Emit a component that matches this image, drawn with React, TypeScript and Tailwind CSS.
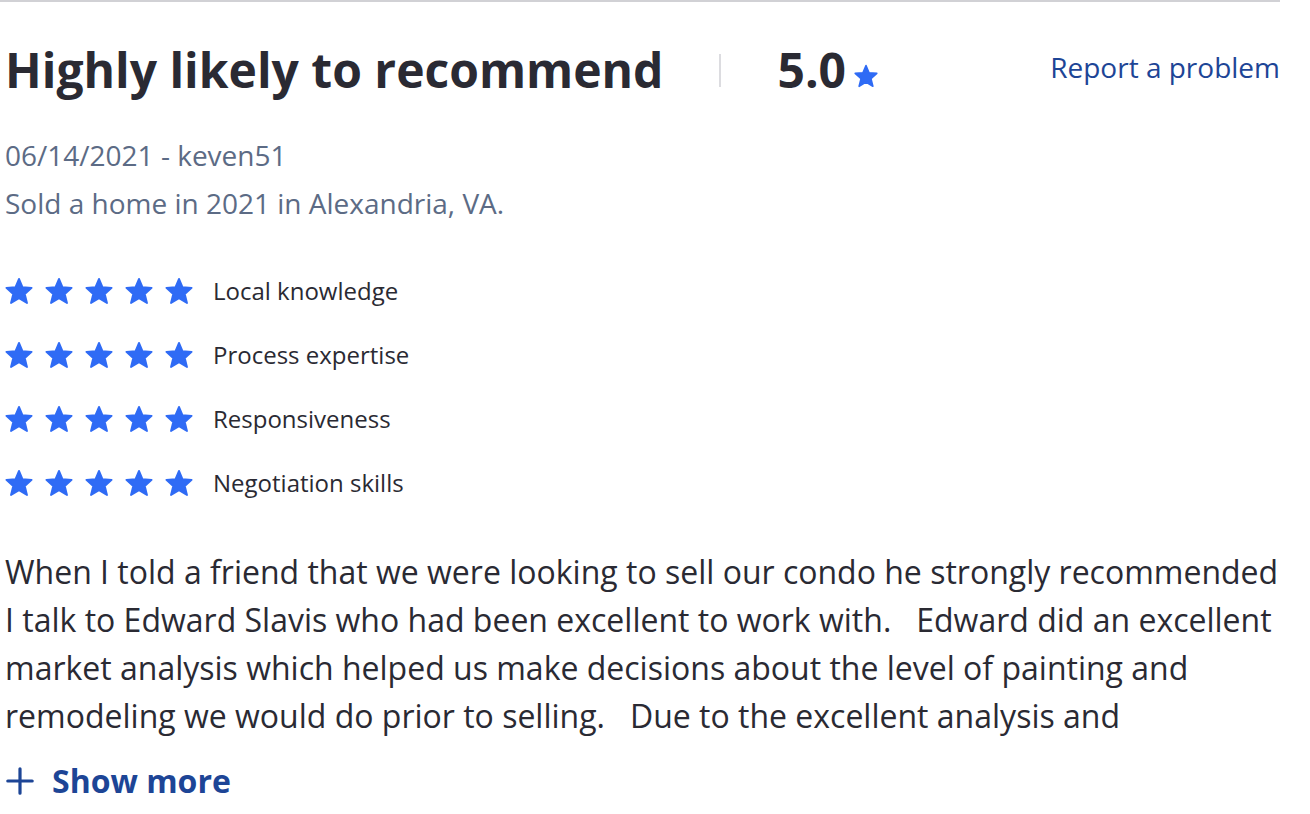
const CATEGORIES = ['Local knowledge', 'Process expertise', 'Responsiveness', 'Negotiation skills'];

function Star({ className }: { className?: string }) {
  return (
    <svg viewBox="0 0 24 24" className={className} fill="currentColor" stroke="currentColor" strokeWidth={1.6} strokeLinejoin="round">
      <path d="M12 1.6l3.06 7.2 7.75.5-5.86 5.31 1.9 7.7L12 18.1l-6.85 4.21 1.9-7.7L1.19 9.3l7.75-.5z" />
    </svg>
  );
}

export default function App() {
  return (
    <div className="min-h-screen bg-white font-['Open_Sans',sans-serif] text-[#2a2a33]">
      <div className="w-[1280px] border-t-2 border-[#d1d1d5] pl-[5px] pt-[40px]">
        {/* Header */}
        <div className="flex items-center">
          <h1 className="text-[48px] font-bold leading-[56px]">Highly likely to recommend</h1>
          <div className="mx-[56px] h-[33px] w-[2px] bg-[#dcdce0]" />
          <div className="flex items-baseline">
            <span className="text-[48px] font-bold leading-[56px]">5.0</span>
            <Star className="ml-[8px] h-[24px] w-[24px] text-[#2f6bf5]" />
          </div>
          <a className="mb-[6px] ml-auto text-[28px] leading-[40px] text-[#1d4596]">Report a problem</a>
        </div>

        {/* Meta */}
        <div className="mt-[33px] text-[28px] leading-[48px] text-[#5c6b85]">
          <div>06/14/2021 - keven51</div>
          <div>Sold a home in 2021 in Alexandria, VA.</div>
        </div>

        {/* Sub ratings */}
        <div className="mt-[46px] flex flex-col gap-[28px]">
          {CATEGORIES.map((c) => (
            <div key={c} className="flex items-center">
              <div className="flex gap-[12px]">
                {[0, 1, 2, 3, 4].map((i) => (
                  <Star key={i} className="h-[28px] w-[28px] text-[#2f6bf5]" />
                ))}
              </div>
              <span className="ml-[20px] text-[24px] leading-[36px]">{c}</span>
            </div>
          ))}
        </div>

        {/* Review body */}
        <p className="mt-[47px] whitespace-nowrap text-[32px] leading-[48px]">
          When I told a friend that we were looking to sell our condo he strongly recommended
          <br />
          I talk to Edward Slavis who had been excellent to work with.&nbsp;&nbsp; Edward did an excellent
          <br />
          market analysis which helped us make decisions about the level of painting and
          <br />
          remodeling we would do prior to selling.&nbsp;&nbsp; Due to the excellent analysis and
        </p>

        <button className="mt-[17px] flex items-center gap-[18px] text-[32px] font-bold leading-[48px] text-[#1d4596]">
          <svg viewBox="0 0 28 28" className="ml-[1px] h-[28px] w-[28px]" stroke="currentColor" strokeWidth={3.2} strokeLinecap="round">
            <path d="M14 1.8v24.4M1.8 14h24.4" />
          </svg>
          Show more
        </button>
      </div>
    </div>
  );
}
